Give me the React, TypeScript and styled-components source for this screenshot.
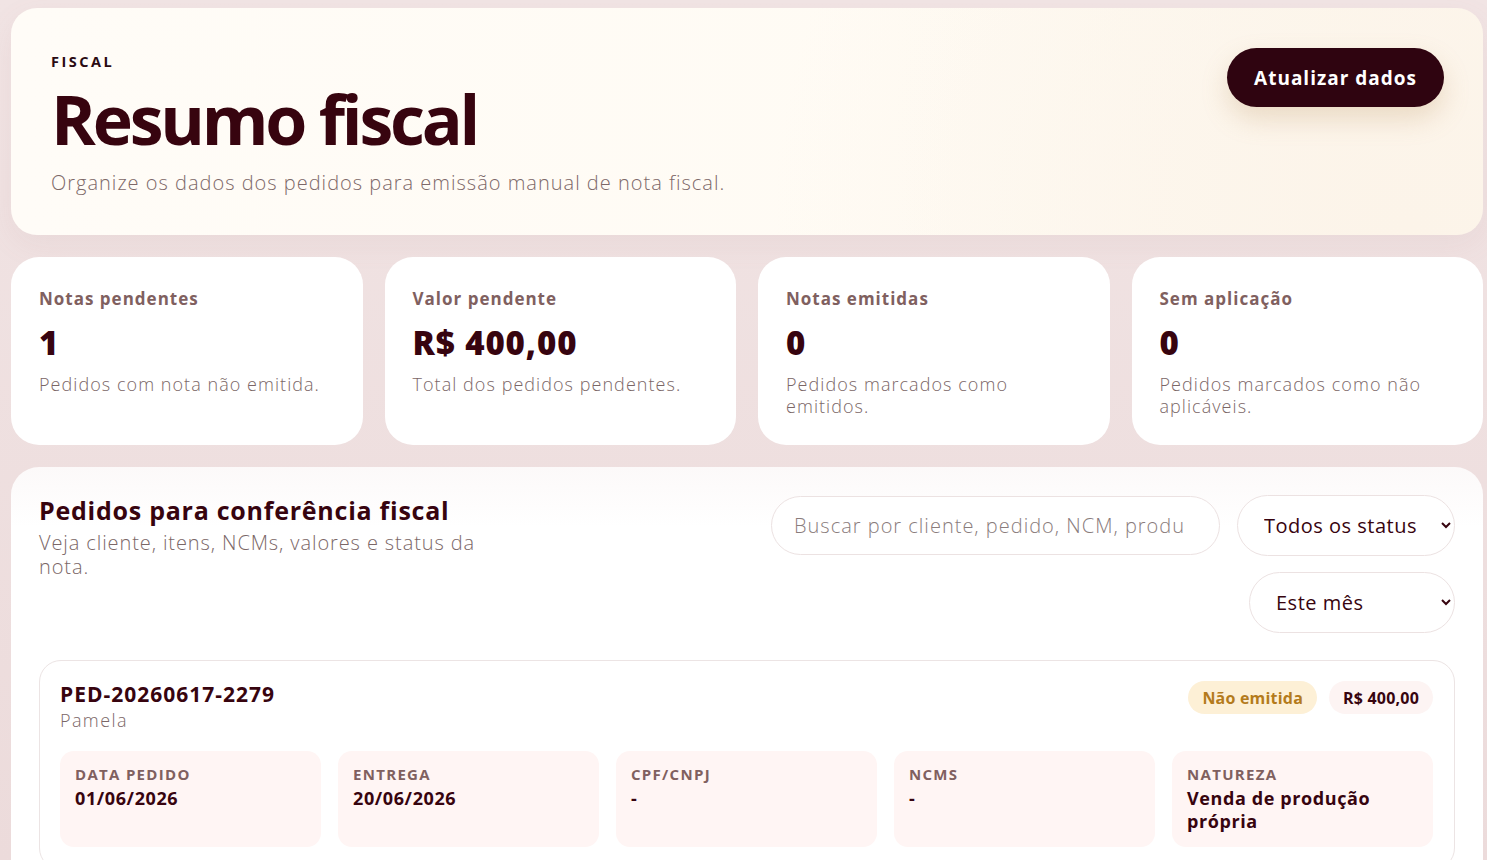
import React from 'react';
import styled, { createGlobalStyle } from 'styled-components';

const GlobalStyle = createGlobalStyle`
  html, body {
    margin: 0;
    padding: 0;
    background: linear-gradient(180deg, #f1e4e4 0%, #ecdbdb 100%);
    min-height: 100%;
  }
  body {
    font-family: "Open Sans", "Liberation Sans", sans-serif;
    color: #3a0613;
    overflow: hidden;
  }
  * { box-sizing: border-box; }
`;

const stats = [
  { label: 'Notas pendentes', value: '1', note: 'Pedidos com nota não emitida.' },
  { label: 'Valor pendente', value: 'R$ 400,00', note: 'Total dos pedidos pendentes.' },
  { label: 'Notas emitidas', value: '0', note: 'Pedidos marcados como emitidos.' },
  { label: 'Sem aplicação', value: '0', note: 'Pedidos marcados como não aplicáveis.' },
];

const orderInfo = [
  { label: 'Data pedido', value: '01/06/2026' },
  { label: 'Entrega', value: '20/06/2026' },
  { label: 'CPF/CNPJ', value: '-' },
  { label: 'NCMs', value: '-' },
  { label: 'Natureza', value: 'Venda de produção própria' },
];

const App = () => {
  return (
    <>
      <GlobalStyle />
      <Page>
        <Hero>
          <HeroText>
            <Eyebrow>FISCAL</Eyebrow>
            <Title>Resumo fiscal</Title>
            <HeroSub>Organize os dados dos pedidos para emissão manual de nota fiscal.</HeroSub>
          </HeroText>
          <PrimaryButton type="button">Atualizar dados</PrimaryButton>
        </Hero>

        <StatsGrid>
          { stats.map((stat) => (
            <StatCard key={ stat.label }>
              <StatLabel>{ stat.label }</StatLabel>
              <StatValue>{ stat.value }</StatValue>
              <StatNote>{ stat.note }</StatNote>
            </StatCard>
          )) }
        </StatsGrid>

        <Panel>
          <PanelHeader>
            <div>
              <PanelTitle>Pedidos para conferência fiscal</PanelTitle>
              <PanelSub>Veja cliente, itens, NCMs, valores e status da nota.</PanelSub>
            </div>
            <Filters>
              <SearchInput placeholder="Buscar por cliente, pedido, NCM, produto..." />
              <Select $width={ 218 } defaultValue="all">
                <option value="all">Todos os status</option>
              </Select>
              <Select $width={ 206 } defaultValue="month">
                <option value="month">Este mês</option>
              </Select>
            </Filters>
          </PanelHeader>

          <OrderCard>
            <OrderTop>
              <div>
                <OrderCode>PED-20260617-2279</OrderCode>
                <OrderClient>Pamela</OrderClient>
              </div>
              <Badges>
                <Badge $tone="warning">Não emitida</Badge>
                <Badge $tone="neutral">R$ 400,00</Badge>
              </Badges>
            </OrderTop>
            <InfoGrid>
              { orderInfo.map((info) => (
                <InfoCell key={ info.label }>
                  <InfoLabel>{ info.label }</InfoLabel>
                  <InfoValue>{ info.value }</InfoValue>
                </InfoCell>
              )) }
            </InfoGrid>
          </OrderCard>
        </Panel>
      </Page>
    </>
  );
};

export default App;

const Page = styled.main`
  display: flex;
  flex-direction: column;
  gap: 22px;
  height: 100vh;
  padding: 8px 4px 0 11px;
`;

const Hero = styled.section`
  display: flex;
  justify-content: space-between;
  align-items: flex-start;
  flex-shrink: 0;
  height: 227px;
  padding: 40px 39px 0 40px;
  border-radius: 26px;
  background:
    radial-gradient(circle at 95% 95%, #fcf4e9 0%, rgba(252, 244, 233, 0) 45%),
    linear-gradient(90deg, #fffcf7 0%, #fffbf4 60%, #fcf6ed 100%);
  box-shadow: 0 10px 30px rgba(160, 110, 110, 0.08);
`;

const HeroText = styled.div`
  display: flex;
  flex-direction: column;
  padding-top: 5px;
`;

const Eyebrow = styled.span`
  font-size: 14.5px;
  font-weight: 700;
  letter-spacing: 2.5px;
  line-height: 18px;
  color: #2a0a12;
`;

const Title = styled.h1`
  margin: 10px 0 0;
  font-size: 68px;
  line-height: 76px;
  font-weight: 700;
  letter-spacing: -3.2px;
  color: #37040f;
`;

const HeroSub = styled.p`
  margin: 14px 0 0;
  font-size: 20px;
  line-height: 24px;
  font-weight: 300;
  letter-spacing: 1px;
  color: #7d6868;
`;

const PrimaryButton = styled.button`
  height: 59px;
  padding: 0 27px;
  border: none;
  border-radius: 999px;
  background: #2f0410;
  color: #ffffff;
  font-family: inherit;
  font-size: 19px;
  font-weight: 700;
  letter-spacing: 1px;
  box-shadow: 0 12px 26px rgba(190, 150, 100, 0.28);
  cursor: pointer;
`;

const StatsGrid = styled.section`
  display: grid;
  grid-template-columns: repeat(4, 1fr);
  gap: 22px;
  flex-shrink: 0;
`;

const StatCard = styled.article`
  height: 188px;
  padding: 31px 28px 0;
  border-radius: 28px;
  background: #ffffff;
`;

const StatLabel = styled.div`
  font-size: 17px;
  line-height: 22px;
  font-weight: 700;
  letter-spacing: 1px;
  color: #80605f;
`;

const StatValue = styled.div`
  margin-top: 12px;
  font-size: 33px;
  line-height: 42px;
  font-weight: 800;
  letter-spacing: 0.9px;
  color: #37040f;
`;

const StatNote = styled.p`
  margin: 9px 0 0;
  font-size: 18px;
  line-height: 22px;
  font-weight: 300;
  letter-spacing: 1.05px;
  color: #7b6767;
`;

const Panel = styled.section`
  flex: 1;
  padding: 28px 28px 0 28px;
  border-radius: 28px 28px 0 0;
  background: linear-gradient(180deg, #fcf9f9 0%, #ffffff 60px);
  overflow: hidden;
`;

const PanelHeader = styled.div`
  display: flex;
  justify-content: space-between;
  align-items: flex-start;
  gap: 24px;
`;

const PanelTitle = styled.h2`
  margin: 0;
  font-size: 25px;
  line-height: 30px;
  font-weight: 700;
  letter-spacing: 0.75px;
  color: #37040f;
`;

const PanelSub = styled.p`
  margin: 6px 0 0;
  max-width: 480px;
  font-size: 20px;
  line-height: 24px;
  font-weight: 300;
  letter-spacing: 0.9px;
  color: #7b6767;
`;

const Filters = styled.div`
  display: flex;
  flex-wrap: wrap;
  justify-content: flex-end;
  align-items: center;
  gap: 16px 17px;
  width: 684px;
`;

const SearchInput = styled.input`
  width: 449px;
  height: 59px;
  padding: 0 36px 0 22px;
  border: 1px solid #ece2e2;
  border-radius: 999px;
  background: #ffffff;
  font-family: inherit;
  font-size: 20px;
  font-weight: 300;
  letter-spacing: 1px;
  color: #37040f;
  outline: none;

  &::placeholder {
    color: #8a7c7c;
  }
`;

const Select = styled.select<{ $width: number }>`
  width: ${ ({ $width }) => $width }px;
  height: 61px;
  padding: 0 8px 0 22px;
  border: 1px solid #ece2e2;
  border-radius: 999px;
  background: #ffffff;
  font-family: inherit;
  font-size: 20px;
  font-weight: 400;
  letter-spacing: 0.5px;
  color: #37040f;
  outline: none;
`;

const OrderCard = styled.article`
  margin-top: 27px;
  padding: 20px 21px 22px 20px;
  border: 1px solid #ece4e4;
  border-radius: 22px;
  background: #ffffff;
`;

const OrderTop = styled.div`
  display: flex;
  justify-content: space-between;
  align-items: flex-start;
`;

const OrderCode = styled.div`
  font-size: 21px;
  line-height: 26px;
  font-weight: 700;
  letter-spacing: 1px;
  color: #37040f;
`;

const OrderClient = styled.div`
  margin-top: 2px;
  font-size: 18px;
  line-height: 22px;
  font-weight: 300;
  letter-spacing: 1.4px;
  color: #7b6767;
`;

const Badges = styled.div`
  display: flex;
  gap: 12px;
`;

const Badge = styled.span<{ $tone: 'warning' | 'neutral' }>`
  display: inline-flex;
  align-items: center;
  height: 33px;
  padding: 0 14px;
  border-radius: 999px;
  font-size: 16px;
  font-weight: 700;
  letter-spacing: 0.2px;
  background: ${ ({ $tone }) => ($tone === 'warning' ? '#fdf0d6' : '#fdf4f3') };
  color: ${ ({ $tone }) => ($tone === 'warning' ? '#b47b1c' : '#37040f') };
`;

const InfoGrid = styled.div`
  display: grid;
  grid-template-columns: repeat(5, 1fr);
  gap: 17px;
  margin-top: 20px;
`;

const InfoCell = styled.div`
  padding: 14px 15px;
  border-radius: 14px;
  background: #fff5f4;
`;

const InfoLabel = styled.div`
  font-size: 15px;
  line-height: 18px;
  font-weight: 700;
  letter-spacing: 1.3px;
  text-transform: uppercase;
  color: #80605f;
`;

const InfoValue = styled.div`
  margin-top: 4px;
  font-size: 18px;
  line-height: 23px;
  font-weight: 700;
  letter-spacing: 0.6px;
  color: #37040f;
`;
